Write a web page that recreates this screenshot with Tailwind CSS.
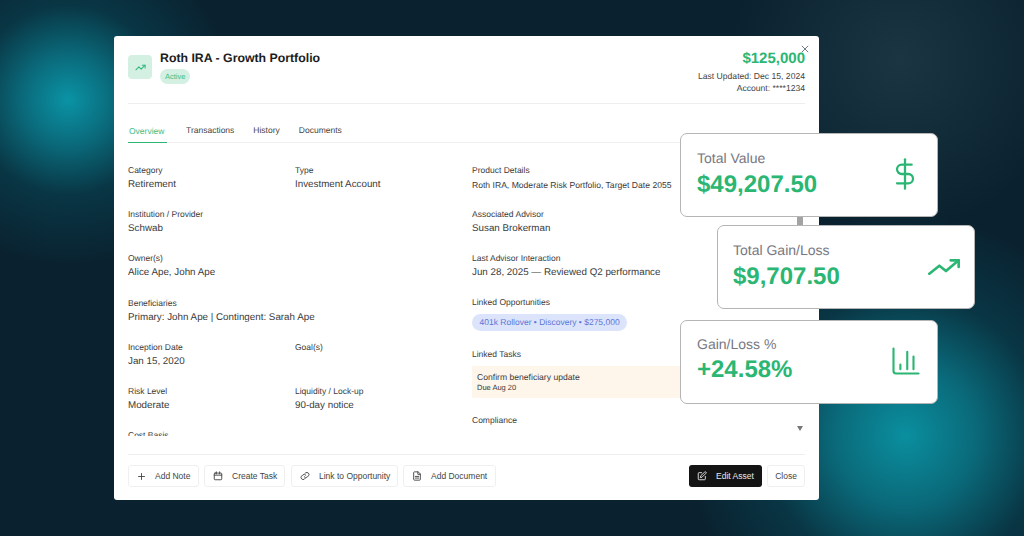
<!DOCTYPE html>
<html lang="en">
<head>
  <meta charset="UTF-8" />
  <title>Roth IRA - Growth Portfolio</title>
  <script src="https://cdn.jsdelivr.net/npm/@tailwindcss/browser@4"></script>
</head>
<body class="font-['Liberation_Sans',Arial,sans-serif] [text-rendering:geometricPrecision]">
  <div class="relative w-[1024px] h-[536px] overflow-hidden pt-[36px] pl-[114px] bg-[#0a2230] bg-[radial-gradient(circle_at_68px_100px,#0a93a5_0,#0a6f80_40px,rgba(8,70,85,0.55)_95px,transparent_165px),radial-gradient(circle_at_905px_435px,#0a8f9f_0,#0a6a7a_70px,rgba(8,70,85,0.55)_140px,transparent_220px),radial-gradient(circle_at_900px_60px,#1b3542_0,transparent_170px)]">

    <!-- Modal -->
    <div class="relative w-[705px] h-[464px] bg-white rounded-[3px] px-[14px] flex flex-col">
      <svg class="absolute top-[9px] right-[10px] w-[8px] h-[8px] text-gray-600" viewBox="0 0 10 10" fill="none" stroke="currentColor" stroke-width="1"><path d="M1 1l8 8M9 1l-8 8"/></svg>

      <!-- Header -->
      <div class="h-[68px] flex justify-between border-b border-[#eeeeee]">
        <div class="flex gap-[8px] pt-[14px]">
          <div class="w-[24px] h-[24px] mt-[5px] rounded-[4px] bg-[#d3f0e2] flex items-center justify-center">
            <svg class="w-[11px] h-[11px] text-[#2fb67a]" viewBox="0 0 24 24" fill="none" stroke="currentColor" stroke-width="2.2" stroke-linecap="round" stroke-linejoin="round"><path d="M22 7l-8.5 8.5-5-5L2 17"/><path d="M16 7h6v6"/></svg>
          </div>
          <div>
            <h1 class="text-[12.3px] leading-[16px] font-bold text-[#1c1c1c]">Roth IRA - Growth Portfolio</h1>
            <span class="block w-fit mt-[3px] h-[15px] px-[5px] rounded-full bg-[#d3f0e2] text-[#3cbd85] text-[7.5px] leading-[15px]">Active</span>
          </div>
        </div>
        <div class="text-right pt-[14px]">
          <div class="text-[15px] leading-[18px] font-bold text-[#2bb673]">$125,000</div>
          <div class="mt-[2px] text-[8.6px] leading-[12px] text-[#444444]">Last Updated: Dec 15, 2024</div>
          <div class="text-[8.6px] leading-[12px] text-[#444444]">Account: ****1234</div>
        </div>
      </div>

      <!-- Tabs -->
      <div class="h-[39px] flex items-end gap-[19px] border-b border-[#f0f0f0] text-[8.5px] text-[#444444]">
        <div class="h-[18px] px-[1px] -mb-px border-b-[1.5px] border-[#2bb673] text-[#3cbd85] w-[39px]">Overview</div>
        <div class="h-[18px]">Transactions</div>
        <div class="h-[18px]">History</div>
        <div class="h-[18px]">Documents</div>
      </div>

      <!-- Details -->
      <div class="relative h-[312px] flex overflow-hidden border-b border-[#eeeeee] text-[#3a3a3a]">
        <div class="w-[344px] h-[293px] pt-[22px] overflow-hidden shrink-0">
          <div class="grid grid-cols-[167px_1fr] gap-y-[16.2px]">
            <div class="h-[28px]"><div class="text-[8.5px] leading-[11px]">Category</div><div class="mt-px text-[9.8px] leading-[16px]">Retirement</div></div>
            <div class="h-[28px]"><div class="text-[8.5px] leading-[11px]">Type</div><div class="mt-px text-[9.8px] leading-[16px]">Investment Account</div></div>
            <div class="h-[28px] col-span-2"><div class="text-[8.5px] leading-[11px]">Institution / Provider</div><div class="mt-px text-[9.8px] leading-[16px]">Schwab</div></div>
            <div class="h-[28px] col-span-2"><div class="text-[8.5px] leading-[11px]">Owner(s)</div><div class="mt-px text-[9.8px] leading-[16px]">Alice Ape, John Ape</div></div>
            <div class="h-[28px] col-span-2"><div class="text-[8.5px] leading-[11px]">Beneficiaries</div><div class="mt-px text-[9.8px] leading-[16px]">Primary: John Ape | Contingent: Sarah Ape</div></div>
            <div class="h-[28px]"><div class="text-[8.5px] leading-[11px]">Inception Date</div><div class="mt-px text-[9.8px] leading-[16px]">Jan 15, 2020</div></div>
            <div class="h-[28px]"><div class="text-[8.5px] leading-[11px]">Goal(s)</div></div>
            <div class="h-[28px]"><div class="text-[8.5px] leading-[11px]">Risk Level</div><div class="mt-px text-[9.8px] leading-[16px]">Moderate</div></div>
            <div class="h-[28px]"><div class="text-[8.5px] leading-[11px]">Liquidity / Lock-up</div><div class="mt-px text-[9.8px] leading-[16px]">90-day notice</div></div>
            <div class="h-[28px] col-span-2"><div class="text-[8.5px] leading-[11px]">Cost Basis</div></div>
          </div>
        </div>
        <div class="flex-1 pt-[22px] pr-[24px]">
          <div class="h-[28px]"><div class="text-[8.5px] leading-[11px]">Product Details</div><div class="mt-px text-[8.6px] leading-[16px]">Roth IRA, Moderate Risk Portfolio, Target Date 2055</div></div>
          <div class="h-[28px] mt-[16.2px]"><div class="text-[8.5px] leading-[11px]">Associated Advisor</div><div class="mt-px text-[9.8px] leading-[16px]">Susan Brokerman</div></div>
          <div class="h-[28px] mt-[16.2px]"><div class="text-[8.5px] leading-[11px]">Last Advisor Interaction</div><div class="mt-px text-[9.8px] leading-[16px]">Jun 28, 2025 — Reviewed Q2 performance</div></div>
          <div class="mt-[15px]">
            <div class="text-[8.5px] leading-[12px]">Linked Opportunities</div>
            <div class="mt-[6px] w-fit h-[17px] px-[7.5px] rounded-full bg-[#dbe4fb] text-[#5b76d6] text-[8.5px] leading-[17px]">401k Rollover • Discovery • $275,000</div>
          </div>
          <div class="mt-[17px]">
            <div class="text-[8.5px] leading-[12px]">Linked Tasks</div>
            <div class="mt-[6px] h-[32px] rounded-[2px] bg-[#fef5eb] pl-[5px] pt-[5px]">
              <div class="text-[8.6px] leading-[12px]">Confirm beneficiary update</div>
              <div class="text-[7.5px] leading-[10px]">Due Aug 20</div>
            </div>
          </div>
          <div class="mt-[16px] text-[8.5px] leading-[12px]">Compliance</div>
        </div>
        <!-- Scrollbar -->
        <div class="absolute right-[2px] top-[60px] w-[6px] h-[105px] rounded-b-[3px] bg-[#a3a3a3]"></div>
        <div class="absolute right-[2px] top-[283px] w-0 h-0 border-l-[3.5px] border-r-[3.5px] border-t-[5px] border-l-transparent border-r-transparent border-t-[#777777]"></div>
      </div>

      <!-- Footer -->
      <div class="flex-1 flex justify-between pt-[10px] text-[8.5px] text-[#444444]">
        <div class="flex gap-[5px]">
          <button class="h-[22px] w-[71px] flex items-center pl-[8px] gap-[9px] rounded-[3px] border border-[#efefef]">
            <svg class="w-[9px] h-[9px]" viewBox="0 0 24 24" fill="none" stroke="currentColor" stroke-width="2.4" stroke-linecap="round"><path d="M12 4v16M4 12h16"/></svg>Add Note</button>
          <button class="h-[22px] w-[81px] flex items-center pl-[8px] gap-[9px] rounded-[3px] border border-[#efefef]">
            <svg class="w-[10px] h-[10px]" viewBox="0 0 24 24" fill="none" stroke="currentColor" stroke-width="2.2" stroke-linecap="round" stroke-linejoin="round"><rect x="3" y="5" width="18" height="16" rx="2"/><path d="M8 2v5M16 2v5M3 10h18"/></svg>Create Task</button>
          <button class="ml-px h-[22px] w-[107px] flex items-center pl-[8px] gap-[9px] rounded-[3px] border border-[#efefef]">
            <svg class="w-[10px] h-[10px]" viewBox="0 0 24 24" fill="none" stroke="currentColor" stroke-width="2.2" stroke-linecap="round" stroke-linejoin="round"><path d="M10 14a5 5 0 0 0 7.5.5l3-3a5 5 0 0 0-7-7l-1.7 1.7"/><path d="M14 10a5 5 0 0 0-7.5-.5l-3 3a5 5 0 0 0 7 7l1.7-1.7"/></svg>Link to Opportunity</button>
          <button class="h-[22px] w-[93px] flex items-center pl-[8px] gap-[9px] rounded-[3px] border border-[#efefef]">
            <svg class="w-[10px] h-[10px]" viewBox="0 0 24 24" fill="none" stroke="currentColor" stroke-width="2.2" stroke-linecap="round" stroke-linejoin="round"><path d="M14 2H6a2 2 0 0 0-2 2v16a2 2 0 0 0 2 2h12a2 2 0 0 0 2-2V8z"/><path d="M14 2v6h6M8 13h8M8 17h8"/></svg>Add Document</button>
        </div>
        <div class="flex gap-[5px]">
          <button class="h-[22px] w-[73px] flex items-center pl-[8px] gap-[9px] rounded-[3px] bg-[#141414] text-[#e8e8e8]">
            <svg class="w-[10px] h-[10px]" viewBox="0 0 24 24" fill="none" stroke="currentColor" stroke-width="2.2" stroke-linecap="round" stroke-linejoin="round"><path d="M11 4H5a2 2 0 0 0-2 2v13a2 2 0 0 0 2 2h13a2 2 0 0 0 2-2v-6"/><path d="M18.5 2.5a2.1 2.1 0 0 1 3 3L12 15l-4 1 1-4z"/></svg>Edit Asset</button>
          <button class="h-[22px] w-[38px] rounded-[3px] border border-[#efefef]">Close</button>
        </div>
      </div>
    </div>

    <!-- Floating metric cards -->
    <div class="absolute left-[680px] top-[133px] w-[258px] h-[84px] bg-white rounded-[7px] border border-[#b5b5b5] pl-[16px] pr-[16px] pt-[15px] flex justify-between">
      <div>
        <div class="text-[14px] leading-[18px] text-[#77777f]">Total Value</div>
        <div class="mt-[4px] text-[24px] leading-[28px] font-bold text-[#2bb673]">$49,207.50</div>
      </div>
      <svg class="w-[32px] h-[32px] mt-[9px] text-[#2bb673]" viewBox="0 0 24 24" fill="none" stroke="currentColor" stroke-width="1.7" stroke-linecap="round" stroke-linejoin="round"><path d="M12 1v22"/><path d="M17 5H9.5a3.5 3.5 0 0 0 0 7h5a3.5 3.5 0 0 1 0 7H6"/></svg>
    </div>
    <div class="absolute left-[717px] top-[225px] w-[258px] h-[84px] bg-white rounded-[7px] border border-[#b5b5b5] pl-[15px] pr-[14px] pt-[15px] flex justify-between">
      <div>
        <div class="text-[14px] leading-[18px] text-[#77777f]">Total Gain/Loss</div>
        <div class="mt-[4px] text-[24px] leading-[28px] font-bold text-[#2bb673]">$9,707.50</div>
      </div>
      <svg class="w-[32px] h-[32px] mt-[10px] text-[#2bb673]" viewBox="0 0 24 24" fill="none" stroke="currentColor" stroke-width="2" stroke-linecap="round" stroke-linejoin="round"><path d="M23 7l-9.5 8-5-4L1 17"/><path d="M17 7h6v5"/></svg>
    </div>
    <div class="absolute left-[680px] top-[320px] w-[258px] h-[84px] bg-white rounded-[7px] border border-[#b5b5b5] pl-[16px] pr-[16px] pt-[14px] flex justify-between">
      <div>
        <div class="text-[14px] leading-[18px] text-[#77777f]">Gain/Loss %</div>
        <div class="mt-[3px] text-[24px] leading-[28px] font-bold text-[#2bb673]">+24.58%</div>
      </div>
      <svg class="w-[30px] h-[30px] mt-[11px] text-[#2bb673]" viewBox="0 0 24 24" fill="none" stroke="currentColor" stroke-width="1.7" stroke-linecap="round" stroke-linejoin="round"><path d="M2 2v18a2 2 0 0 0 2 2h18"/><path d="M7.5 18.6v-3.8M13 18.6V4.6M18 18.6V8.4"/></svg>
    </div>
  </div>
</body>
</html>
